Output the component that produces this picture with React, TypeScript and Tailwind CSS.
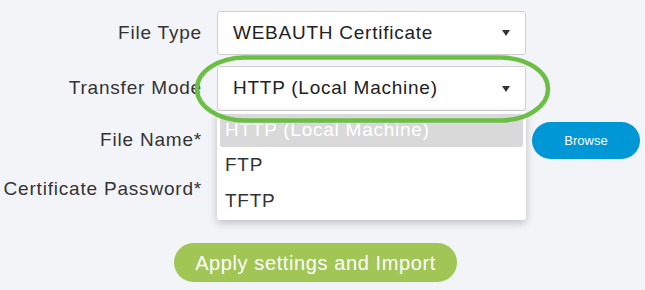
import React from "react";

function Caret() {
  return (
    <svg width="8" height="6" viewBox="0 0 8 6" className="absolute right-[15px] top-1/2 -translate-y-1/2">
      <path d="M0 0 H8 L4 6 Z" fill="#333" />
    </svg>
  );
}

function Select({ value, className = "" }: { value: string; className?: string }) {
  return (
    <div
      className={`relative flex w-[309px] items-center rounded-[3px] border border-[#cfcfcf] bg-white pl-[15px] text-[19px] tracking-[0.75px] text-[#222] ${className}`}
    >
      {value}
      <Caret />
    </div>
  );
}

const label = "w-[202px] text-right text-[19px] tracking-[0.8px] text-[#333]";

export default function App() {
  return (
    <div className="relative h-[290px] w-[645px] overflow-hidden bg-[#f3f4f8] font-['Liberation_Sans',Arial,sans-serif]">
      <div className="pt-[11px]">
        <div className="flex h-[44px] items-center">
          <label className={label}>File Type</label>
          <Select value="WEBAUTH Certificate" className="ml-[15px] h-[44px]" />
        </div>

        <div className="mt-[11px] flex h-[45px] items-center">
          <label className={label}>Transfer Mode</label>
          <Select value="HTTP (Local Machine)" className="ml-[15px] h-[45px]" />
        </div>

        <div className="mt-[11px] flex h-[37px] items-center">
          <label className={label}>File Name*</label>
          <div className="ml-[15px] w-[309px]" />
          <button className="ml-[6px] h-[37px] w-[108px] rounded-full bg-[#0097d6] text-[13px] text-white">
            Browse
          </button>
        </div>

        <div className="mt-[12px] flex h-[36px] items-center">
          <label className={label}>Certificate Password*</label>
        </div>

        <button className="ml-[174px] mt-[36px] h-[39px] w-[283px] rounded-full bg-[#a1c655] text-[20px] tracking-[0.6px] text-white">
          Apply settings and Import
        </button>
      </div>

      {/* open dropdown list */}
      <div className="absolute left-[217px] top-[111px] h-[109px] w-[309px] rounded-b-[3px] bg-white px-[3px] pt-[3px] text-[19px] tracking-[0.75px] shadow-[0_3px_8px_rgba(0,0,0,0.22)]">
        <div className="flex h-[33px] items-center rounded-[2px] bg-[#d9d9d9] pl-[5px] text-white">
          HTTP (Local Machine)
        </div>
        <div className="flex h-[36px] items-center pl-[5px] text-[#333]">FTP</div>
        <div className="flex h-[36px] items-center pl-[5px] text-[#333]">TFTP</div>
      </div>

      {/* highlight ring */}
      <svg className="pointer-events-none absolute inset-0" width="645" height="290">
        <rect x="197" y="57.5" width="351" height="63" rx="48" ry="31.5" fill="none" stroke="#6cbf45" strokeWidth="4.5" />
      </svg>
    </div>
  );
}
